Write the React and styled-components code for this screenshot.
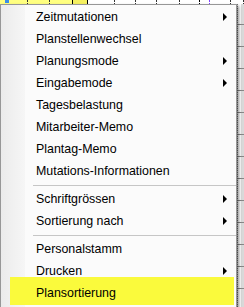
import React from "react";
import styled, { createGlobalStyle } from "styled-components";

const Global = createGlobalStyle`
  html, body { margin: 0; padding: 0; background: #ffffff; }
  body { width: 244px; height: 307px; overflow: hidden; font-family: "Liberation Sans", Arial, sans-serif; }
`;

const Sheet = styled.div`
  position: relative;
  width: 244px;
  height: 307px;
  display: flex;
  flex-direction: column;
  background: #ffffff;
`;

const TopStrip = styled.div`
  display: flex;
  height: 4px;
  flex: none;
`;

const Cell = styled.div`
  width: ${(p) => p.$w}px;
  flex: none;
  background: ${(p) => p.$bg || "#ffffff"};
  border-right: 1px ${(p) => p.$line || "dotted"} ${(p) => p.$lc || "#333"};
  box-sizing: border-box;
  display: flex;
  align-items: flex-start;
`;

const Tiny = styled.span`
  display: block;
  width: 4px;
  height: 3px;
  margin-left: 5px;
  background: #3a8ee8;
`;

const SheetBody = styled.div`
  flex: 1;
  display: flex;
`;

const Filler = styled.div`
  flex: 1;
`;

const RightCol = styled.div`
  width: 7px;
  flex: none;
  background:
    repeating-linear-gradient(to bottom, transparent 0 20px, #888 20px 21px, transparent 21px 22px),
    linear-gradient(to right, #ffffff 0 3px, #d9d9d9 3px);
  border-left: 1px dotted #777;
  box-sizing: border-box;
`;

const Menu = styled.div`
  position: absolute;
  left: 0;
  top: 4px;
  width: 237px;
  height: 303px;
  box-sizing: border-box;
  border: 1px solid #979797;
  border-bottom: none;
  padding-top: 1px;
  background: linear-gradient(to right, #ebebeb 0, #f6f6f6 24px, #fbfbfb 24px);
  box-shadow: 2px 2px 3px rgba(0, 0, 0, 0.45);
  display: flex;
  flex-direction: column;
  font-family: "Liberation Sans", Arial, sans-serif;
  font-size: 12.4px;
  color: #000;
`;

const Item = styled.div`
  height: ${(p) => (p.$active ? 28 : 22)}px;
  box-sizing: border-box;
  display: flex;
  align-items: center;
  padding-left: ${(p) => (p.$active ? 26 : 35)}px;
  padding-top: ${(p) => (p.$active ? 4 : 0)}px;
  margin: ${(p) => (p.$active ? "-5px 2px 0 9px" : "0")};
  background: ${(p) => (p.$active ? "#fafa3c" : "transparent")};
  white-space: nowrap;
`;

const Label = styled.span`
  flex: 1;
`;

const Arrow = styled.span`
  width: 0;
  height: 0;
  border-top: 4px solid transparent;
  border-bottom: 4px solid transparent;
  border-left: 4px solid #000;
  margin-right: 9px;
`;

const Separator = styled.div`
  height: 6px;
  display: flex;
  align-items: center;
  padding-left: 32px;
  padding-top: ${(p) => p.$shift || 0}px;
  box-sizing: border-box;
  &::after {
    content: "";
    flex: 1;
    height: 1px;
    background: #c6c6c6;
  }
`;

const items = [
  { t: "Zeitmutationen", sub: true },
  { t: "Planstellenwechsel" },
  { t: "Planungsmode", sub: true },
  { t: "Eingabemode", sub: true },
  { t: "Tagesbelastung" },
  { t: "Mitarbeiter-Memo" },
  { t: "Plantag-Memo" },
  { t: "Mutations-Informationen" },
  { sep: true, shift: 0 },
  { t: "Schriftgrössen", sub: true },
  { t: "Sortierung nach", sub: true },
  { sep: true, shift: 1 },
  { t: "Personalstamm" },
  { t: "Drucken", sub: true },
  { t: "Plansortierung", active: true },
];

export default function App() {
  return (
    <>
      <Global />
      <Sheet>
        <TopStrip>
          <Cell $w={28} $bg="#ffff80"><Tiny /></Cell>
          <Cell $w={22} $bg="#ffff80" />
          <Cell $w={23} $bg="#ffff80" $line="solid" $lc="#000" />
          <Cell $w={15} $bg="#f5f060" $line="solid" $lc="#000" />
          <Cell $w={27} />
          <Cell $w={21} />
          <Cell $w={21} />
          <Cell $w={23} />
          <Cell $w={20} $lc="#000" />
          <Cell $w={10} $lc="#8040ff" />
          <Cell $w={21} />
          <Cell $w={13} />
        </TopStrip>
        <SheetBody>
          <Filler />
          <RightCol />
        </SheetBody>
        <Menu>
          {items.map((it, i) =>
            it.sep ? (
              <Separator key={i} $shift={it.shift} />
            ) : (
              <Item key={i} $active={it.active}>
                <Label>{it.t}</Label>
                {it.sub && <Arrow />}
              </Item>
            )
          )}
        </Menu>
      </Sheet>
    </>
  );
}
